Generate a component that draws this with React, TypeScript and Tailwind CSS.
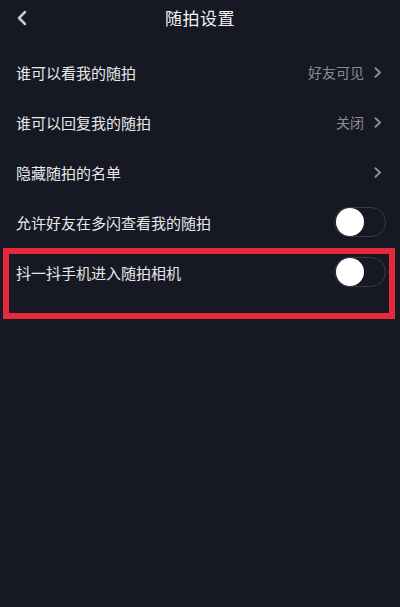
import { ChevronLeft } from 'lucide-react';

type Row =
  | { label: string; kind: 'link'; value?: string }
  | { label: string; kind: 'switch'; on: boolean; marked?: boolean };

const rows: Row[] = [
  { label: '谁可以看我的随拍', kind: 'link', value: '好友可见' },
  { label: '谁可以回复我的随拍', kind: 'link', value: '关闭' },
  { label: '隐藏随拍的名单', kind: 'link' },
  { label: '允许好友在多闪查看我的随拍', kind: 'switch', on: false },
  { label: '抖一抖手机进入随拍相机', kind: 'switch', on: false, marked: true },
];

function Chevron() {
  return (
    <svg className="h-[11px] w-[8px]" viewBox="0 0 8 11" fill="none" aria-hidden="true">
      <path d="M1.5 1.2L6 5.5L1.5 9.8" stroke="#8b8c92" strokeWidth="2" strokeLinecap="round" strokeLinejoin="round" />
    </svg>
  );
}

function Toggle({ on }: { on: boolean }) {
  return (
    <div
      className={
        on
          ? 'relative h-[30px] w-[52px] rounded-full border-[1.5px] border-[#fe2c55] bg-[#fe2c55]'
          : 'relative h-[30px] w-[52px] rounded-full border-[1.5px] border-[#393a43] bg-transparent'
      }
    >
      <div
        className={
          on
            ? 'absolute top-[-0.5px] right-[0.5px] h-[28px] w-[28px] rounded-full bg-white'
            : 'absolute top-[-0.5px] left-[0.5px] h-[28px] w-[28px] rounded-full bg-white'
        }
      />
    </div>
  );
}

export default function App() {
  return (
    <div
      className="relative h-[607px] w-[400px] overflow-hidden bg-[#161823] text-[#e8e8ea]"
      style={{ fontFamily: '"Noto Sans CJK SC", "Noto Sans", sans-serif' }}
    >
      <header className="relative flex h-[35px] items-center justify-center">
        <ChevronLeft className="absolute left-[10px] top-[6px] h-[24px] w-[24px] text-[#c9c9cd]" strokeWidth={2.5} />
        <h1 className="text-[17px] font-normal tracking-[0.5px] text-[#f1f1f3]">随拍设置</h1>
      </header>

      <ul className="pt-[12px]">
        {rows.map((row) => (
          <li key={row.label} className="relative flex h-[50px] items-center justify-between pl-[16px] pr-[14px]">
            <span className="text-[15px] leading-none">{row.label}</span>
            {row.kind === 'link' ? (
              <span className="flex items-center gap-[10px] pr-[4px] text-[14px] text-[#8b8c92]">
                {row.value && <span>{row.value}</span>}
                <Chevron />
              </span>
            ) : (
              <Toggle on={row.on} />
            )}
            {row.kind === 'switch' && row.marked && (
              <div className="pointer-events-none absolute left-[3px] top-[1px] h-[71px] w-[392px] border-[6px] border-[#e8283c]" />
            )}
          </li>
        ))}
      </ul>
    </div>
  );
}
